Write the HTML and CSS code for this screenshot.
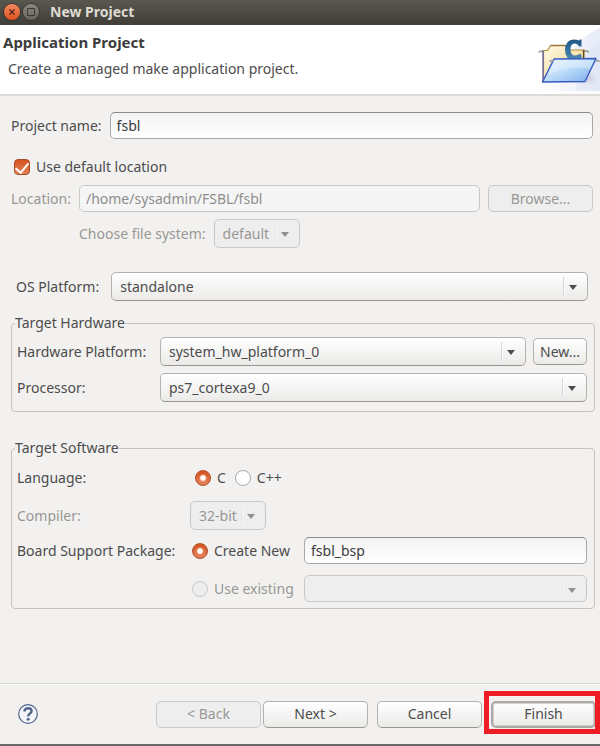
FILE: index.html
```html
<!DOCTYPE html>
<html lang="en">
<head>
<meta charset="utf-8">
<meta name="viewport" content="width=device-width, initial-scale=1">
<title>New Project</title>
<link rel="stylesheet" href="styles.css">
</head>
<body>
<form class="dialog" onsubmit="return false">
  <div class="titlebar">
    <button type="button" class="window-button close" aria-label="Close">
      <svg viewBox="0 0 16 16" width="16" height="16"><path d="M5.500 5.500l5 5M10.500 5.500l-5 5" stroke="#4f2a1c" stroke-width="1.300"/></svg>
    </button>
    <button type="button" class="window-button maximize" aria-label="Maximize">
      <svg viewBox="0 0 16 16" width="16" height="16"><path d="M4.500 4.500h7v7h-7z" fill="none" stroke="#3a3935"/></svg>
    </button>
    <span class="window-title">New Project</span>
  </div>

  <header class="banner">
    <div class="banner-text">
      <h1>Application Project</h1>
      <p>Create a managed make application project.</p>
    </div>
    <svg class="banner-art" viewBox="0 0 75 66" width="75" height="66" aria-hidden="true">
      <defs>
        <linearGradient id="glow" x1="0" y1="0" x2="1" y2="0"><stop offset="0" stop-color="#fff"/><stop offset="1" stop-color="#dfe5f5"/></linearGradient>
        <linearGradient id="paper" x1="0" y1="0" x2="1" y2="1"><stop offset="0" stop-color="#fffbe6"/><stop offset="1" stop-color="#f0cd80"/></linearGradient>
        <linearGradient id="front" x1="0" y1="0" x2="1" y2="1"><stop offset="0" stop-color="#e9f6ff"/><stop offset=".5" stop-color="#b9daf8"/><stop offset="1" stop-color="#78a9ea"/></linearGradient>
        <linearGradient id="letter" x1="0" y1="0" x2="0" y2="1"><stop offset="0" stop-color="#1f5684"/><stop offset="1" stop-color="#4a8ab4"/></linearGradient>
        <radialGradient id="shade"><stop offset="0" stop-color="#b9b4cf" stop-opacity=".7"/><stop offset="1" stop-color="#b9b4cf" stop-opacity="0"/></radialGradient>
      </defs>
      <path d="M75 3Q50 14 38 40L10 66H75z" fill="url(#glow)" opacity=".75"/>
      <path d="M75 17Q61 24 54 40L50 66H75z" fill="#d5def2" opacity=".3"/>
      <ellipse cx="60" cy="53" rx="13" ry="7" fill="url(#shade)"/>
      <path d="M14 27.500q0-1.500 4-1.500M59 26h2q2.500 0 2.500 1.500" fill="none" stroke="#a5a5a8" stroke-width="2"/>
      <path d="M18.500 56V25.500h4l3-5h15l3 4.500h15.500v31z" fill="url(#paper)" stroke="#b78b38" stroke-width="1.200"/>
      <path d="M25.500 20.500h15" stroke="#9b7739" stroke-width="1.500"/>
      <path d="M18 26v30" stroke="#6063b2" stroke-width="1.300"/>
      <path d="M58.500 25v10" stroke="#604820" stroke-width="1.300"/>
      <path d="M56.500 14.500v7h-2.500q-1.500-3-4.500-3-4 0-4 6t4.500 6q3.500 0 5-2l2 3q-3 3.500-8 3.500-9 0-9-10t9-10.500q3 0 5 1l1-1z" fill="url(#letter)"/>
      <path d="M29 34L71 33.500 60 56.500 17.500 57z" fill="url(#front)" stroke="#365abc" stroke-width="1.400" stroke-linejoin="round"/>
      <path d="M30 35.500H69L65 44Q43 40 23 50z" fill="#fff" opacity=".3"/>
      <path d="M25 37q0-1.500 3.500-1.500M71 35.500q3 0 3 1.500" stroke="#a5a5a8" stroke-width="2" fill="none"/>
    </svg>
  </header>

  <main class="content">
    <div class="row project-row">
      <label for="project-name">Project name:</label>
      <input class="field grow" id="project-name" type="text" value="fsbl">
    </div>

    <div class="row default-row">
      <input class="check" id="use-default" type="checkbox" checked>
      <label for="use-default">Use default location</label>
    </div>

    <div class="row location-row">
      <label class="muted" for="location">Location:</label>
      <input class="field grow" id="location" type="text" value="/home/sysadmin/FSBL/fsbl" disabled>
      <button type="button" class="button" disabled>Browse...</button>
    </div>

    <div class="row filesystem-row">
      <label class="muted" for="filesystem">Choose file system:</label>
      <span class="combo compact filesystem off"><select id="filesystem" disabled><option>default</option></select></span>
    </div>

    <div class="row platform-row">
      <label for="os-platform">OS Platform:</label>
      <span class="combo grow"><select id="os-platform"><option>standalone</option></select></span>
    </div>

    <fieldset class="group hardware">
      <legend>Target Hardware</legend>
      <div class="group-grid hardware-grid">
        <label for="hw-platform">Hardware Platform:</label>
        <div class="row split">
          <span class="combo grow"><select id="hw-platform"><option>system_hw_platform_0</option></select></span>
          <button type="button" class="button small">New...</button>
        </div>
        <label for="processor">Processor:</label>
        <span class="combo"><select id="processor"><option>ps7_cortexa9_0</option></select></span>
      </div>
    </fieldset>

    <fieldset class="group software">
      <legend>Target Software</legend>
      <div class="group-grid software-grid">
        <span>Language:</span>
        <div class="row choices" role="radiogroup" aria-label="Language">
          <input class="radio" id="lang-c" name="language" type="radio" checked><label for="lang-c">C</label>
          <input class="radio" id="lang-cpp" name="language" type="radio"><label for="lang-cpp">C++</label>
        </div>
        <label class="muted" for="compiler">Compiler:</label>
        <span class="combo compact compiler off"><select id="compiler" disabled><option>32-bit</option></select></span>
        <span>Board Support Package:</span>
        <div class="bsp-grid">
          <div class="row option">
            <input class="radio" id="bsp-new" name="bsp" type="radio" checked><label for="bsp-new">Create New</label>
          </div>
          <input class="field" type="text" value="fsbl_bsp" aria-label="New package name">
        </div>
        <span></span>
        <div class="bsp-grid">
          <div class="row option">
            <input class="radio" id="bsp-existing" name="bsp" type="radio" disabled><label class="muted" for="bsp-existing">Use existing</label>
          </div>
          <span class="combo short off"><select disabled aria-label="Existing package"><option></option></select></span>
        </div>
      </div>
    </fieldset>
  </main>

  <footer class="actions">
    <button type="button" class="help" aria-label="Help">
      <svg viewBox="0 0 20 20" width="20" height="20"><circle cx="10" cy="10" r="9.300" fill="#f4f5f8" stroke="#53648b" stroke-width="1.200"/><path d="M6.300 7.500Q6.800 4.200 10.200 4.200q3.400 0 3.400 2.800 0 1.600-1.900 2.700-1.500.9-1.500 2.800" fill="none" stroke="#53648b" stroke-width="2.400"/><circle cx="10.200" cy="15.300" r="1.500" fill="#53648b"/></svg>
    </button>
    <div class="row steps">
      <button type="button" class="button" disabled>&lt; Back</button>
      <button type="button" class="button">Next &gt;</button>
    </div>
    <button type="button" class="button">Cancel</button>
    <div class="highlight"><button type="submit" class="button default">Finish</button></div>
  </footer>
</form>
</body>
</html>
```

FILE: styles.css
```css
* {
  box-sizing: border-box;
}

body {
  margin: 0;
  background: #f2f1ef;
  color: #4c4c4c;
  font: 14px/20px "Noto Sans", "Open Sans", sans-serif;
}

input,
select,
button {
  margin: 0;
  font: inherit;
  color: inherit;
}

.dialog {
  display: flex;
  flex-direction: column;
  min-height: 100vh;
  border-bottom: 2px solid #696767;
}

.titlebar {
  display: flex;
  align-items: center;
  gap: 3px;
  height: 25px;
  padding: 0 4px 2px;
  background: linear-gradient(#5a574e, #3f3e39);
}

.window-button {
  display: flex;
  width: 16px;
  height: 16px;
  padding: 0;
  border: 0;
  border-radius: 50%;
  box-shadow: 0 0 0 1px #37352f;
}

.close {
  background: linear-gradient(#f58a63, #e0501f);
}

.maximize {
  background: linear-gradient(#8b897f, #65635c);
}

.window-title {
  margin-left: 8px;
  color: #dfdbd2;
  font-weight: bold;
}

.banner {
  display: flex;
  justify-content: space-between;
  height: 71px;
  background: #fff;
  border-bottom: 2px solid #dcdbda;
}

.banner-text {
  padding: 7px 3px;
}

.banner h1 {
  margin: 0;
  color: #3c3c3c;
  font-size: 15px;
  line-height: 20px;
}

.banner p {
  margin: 7px 5px;
}

.content {
  flex: 1;
  padding: 16px 5px 0 11px;
}

.row {
  display: flex;
  align-items: center;
}

.grow {
  flex: 1;
  min-width: 0;
}

.muted {
  color: #999793;
}

.field {
  height: 27px;
  min-width: 0;
  padding: 0 6px;
  border: 1px solid #a9a8a6;
  border-top-color: #8c8b8a;
  border-radius: 5px;
  background: linear-gradient(#f3f3f3, #fff);
  color: #3c3c3c;
}

.field:disabled {
  border-color: #c9c8c7;
  background: #f5f5f5;
  color: #8f8e8b;
}

.button {
  width: 105px;
  height: 27px;
  padding: 0;
  border: 1px solid #b4b2b0;
  border-bottom-color: #979593;
  border-radius: 5px;
  background: linear-gradient(#fff, #ebeae8);
}

.button:disabled {
  border-color: #c9c8c6;
  background: #eee;
  color: #999793;
}

.button.small {
  width: 54px;
}

.combo {
  position: relative;
  display: block;
}

.combo select {
  display: block;
  width: 100%;
  height: 29px;
  padding: 0 32px 0 8px;
  border: 1px solid #b4b2b0;
  border-bottom-color: #979593;
  border-radius: 5px;
  background: linear-gradient(#fff, #ebeae8);
  appearance: none;
}

.combo::before {
  content: "";
  position: absolute;
  top: 5px;
  bottom: 5px;
  right: 23px;
  width: 2px;
  background: linear-gradient(90deg, #d8d7d5 50%, #fafafa 50%);
  pointer-events: none;
}

.combo::after {
  content: "";
  position: absolute;
  top: 13px;
  right: 11px;
  border: 4px solid transparent;
  border-top: 5px solid #4c4c4c;
  border-bottom: 0;
  pointer-events: none;
}

.combo.off select {
  border-color: #c9c8c6;
  background: #eee;
  color: #999793;
  opacity: 1;
}

.combo.off::before {
  background: linear-gradient(90deg, #e6e5e4 50%, #f5f5f5 50%);
}

.combo.off::after {
  border-top-color: #92908a;
}

.combo.compact select {
  padding-right: 0;
}

.combo.short select {
  height: 27px;
}

.filesystem {
  width: 86px;
}

.compiler {
  width: 76px;
}

.check,
.radio {
  flex: none;
  width: 16px;
  height: 16px;
  appearance: none;
  border: 1px solid #a9a8a6;
  background: #fff;
}

.check {
  border-radius: 4px;
}

.radio {
  border-radius: 50%;
}

.check:checked {
  display: grid;
  place-items: start center;
  border-color: #a84a28;
  background: linear-gradient(#d9531f, #e2825b);
}

.check:checked::before {
  content: "";
  width: 6px;
  height: 11px;
  border: solid #fff;
  border-width: 0 2px 2px 0;
  transform: rotate(40deg);
}

.radio:checked {
  border-color: #b04b28;
  background: radial-gradient(circle, #fff 2px, transparent 4px), linear-gradient(#d4501d, #e4845c);
}

.radio:disabled {
  border-color: #c9c8c6;
  background: #eee;
}

.project-row {
  gap: 8px;
  padding-right: 2px;
}

.default-row {
  gap: 6px;
  padding: 18px 3px 8px;
}

.location-row {
  gap: 8px;
  padding-right: 2px;
}

.filesystem-row {
  gap: 8px;
  padding: 7px 0 0 68px;
}

.platform-row {
  gap: 12px;
  padding: 24px 7px 0 5px;
}

.group {
  min-width: 0;
  margin: 12px 0 0;
  padding: 0 7px 9px 3px;
  border: 1px solid #c5c4c2;
  border-radius: 4px;
}

.group legend {
  padding: 0;
}

.group-grid {
  display: grid;
  align-items: center;
  padding-left: 2px;
}

.hardware-grid {
  grid-template-columns: 143px 1fr;
  gap: 7px 0;
  padding-top: 4px;
}

.split {
  gap: 7px;
}

.software {
  margin-top: 26px;
  padding-bottom: 2px;
}

.software-grid {
  grid-template-columns: 173px 1fr;
  grid-template-rows: 32px 29px 27px 35px;
  gap: 7px 0;
  padding-top: 4px;
}

.choices {
  gap: 6px;
  padding-left: 5px;
}

.choices label + .radio {
  margin-left: 3px;
}

.bsp-grid {
  display: grid;
  grid-template-columns: 114px 1fr;
  align-items: center;
}

.option {
  gap: 6px;
  padding-left: 2px;
}

.actions {
  display: flex;
  align-items: center;
  height: 61px;
  border-top: 1px solid #d8d7d5;
  box-shadow: inset 0 1px #fbfbfa;
}

.help {
  width: 20px;
  height: 20px;
  margin: 0 auto 0 18px;
  padding: 0;
  border: 0;
  background: none;
}

.help svg,
.banner-art {
  display: block;
}

.steps {
  gap: 2px;
  margin-right: 9px;
}

.highlight {
  position: relative;
  margin: 0 4px 0 9px;
}

.highlight::after {
  content: "";
  position: absolute;
  inset: -10px -4px -6px -7px;
  border: 5px solid #ee1c25;
  pointer-events: none;
}

.highlight .button {
  display: block;
  border: 2px solid #aaa9a7;
  box-shadow: inset 0 0 0 1px #d2d1cf;
}
```
